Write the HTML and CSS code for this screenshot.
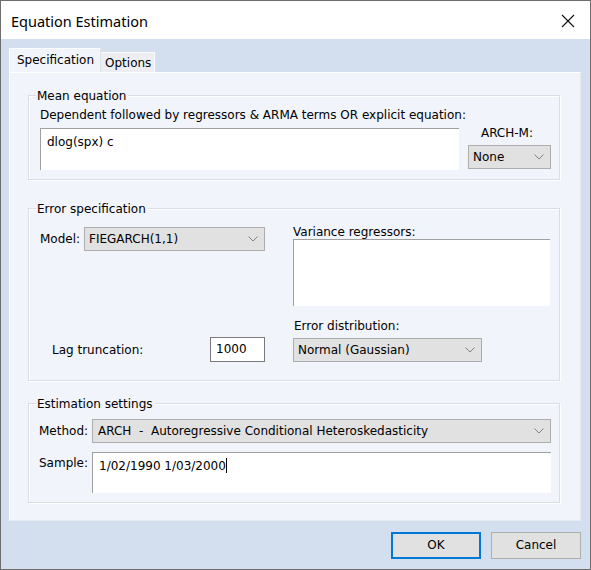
FILE: index.html
```
<!DOCTYPE html>
<html>
<head>
<meta charset="utf-8">
<link rel="stylesheet" href="styles.css">
</head>
<body>
<div class="window">
  <div class="titlebar">
    <span class="title">Equation Estimation</span>
    <svg class="close" width="14" height="14" viewBox="0 0 14 14"><path d="M1 1 L13 13 M13 1 L1 13" stroke="#111" stroke-width="1.1" fill="none"/></svg>
  </div>
  <div class="client">
    <div class="tabs">
      <div class="tab active">Specification</div>
      <div class="tab">Options</div>
    </div>
    <div class="panel">
      <div class="group g-mean">
        <div class="legend">Mean equation</div>
        <div class="mean-grid">
          <div class="lbl span2">Dependent followed by regressors &amp; ARMA terms OR explicit equation:</div>
          <div class="edit mean-edit">dlog(spx) c</div>
          <div class="archm">
            <div class="lbl">ARCH-M:</div>
            <div class="select s-archm"><span>None</span><svg class="chev" width="10" height="6" viewBox="0 0 10 6"><path d="M0.5 0.5 L5 5 L9.5 0.5" stroke="#777" stroke-width="0.9" fill="none"/></svg></div>
          </div>
        </div>
      </div>

      <div class="group g-err">
        <div class="legend">Error specification</div>
        <div class="err-left">
          <div class="model-row">
            <span class="lbl">Model:</span>
            <div class="select s-model"><span>FIEGARCH(1,1)</span><svg class="chev" width="10" height="6" viewBox="0 0 10 6"><path d="M0.5 0.5 L5 5 L9.5 0.5" stroke="#777" stroke-width="0.9" fill="none"/></svg></div>
          </div>
          <div class="lag-row">
            <span class="lbl">Lag truncation:</span>
            <div class="num">1000</div>
          </div>
        </div>
        <div class="err-right">
          <div class="lbl lbl-tight">Variance regressors:</div>
          <div class="edit var-edit"></div>
          <div class="lbl lbl-tight dist-lbl">Error distribution:</div>
          <div class="select s-dist"><span>Normal (Gaussian)</span><svg class="chev" width="10" height="6" viewBox="0 0 10 6"><path d="M0.5 0.5 L5 5 L9.5 0.5" stroke="#777" stroke-width="0.9" fill="none"/></svg></div>
        </div>
      </div>

      <div class="group g-est">
        <div class="legend">Estimation settings</div>
        <div class="est-grid">
          <span class="lbl">Method:</span>
          <div class="select s-method"><span class="pre">ARCH  -  Autoregressive Conditional Heteroskedasticity</span><svg class="chev" width="10" height="6" viewBox="0 0 10 6"><path d="M0.5 0.5 L5 5 L9.5 0.5" stroke="#777" stroke-width="0.9" fill="none"/></svg></div>
          <span class="lbl sample-lbl">Sample:</span>
          <div class="edit sample-edit">1/02/1990 1/03/2000<span class="caret"></span></div>
        </div>
      </div>
    </div>
    <div class="buttons">
      <div class="btn ok">OK</div>
      <div class="btn">Cancel</div>
    </div>
  </div>
</div>
</body>
</html>
```
FILE: styles.css
```
* { box-sizing: border-box; }
html, body { margin: 0; padding: 0; }
body {
  width: 591px;
  height: 570px;
  overflow: hidden;
  font-family: "DejaVu Sans", sans-serif;
  font-size: 12px;
  color: #000;
}
.window {
  width: 591px;
  height: 570px;
  border: 1px solid #6e6e6e;
  display: flex;
  flex-direction: column;
  background: #d3deef;
}
.titlebar {
  height: 38px;
  background: #fff;
  display: flex;
  align-items: center;
  justify-content: space-between;
  padding: 0 15px 0 10px;
  flex: none;
}
.title {
  font-family: "Noto Sans", "Open Sans", sans-serif;
  font-size: 14.5px;
  color: #000;
  margin-top: 1px;
}
.close { display: block; margin-top: 1px; }
.client {
  flex: 1;
  display: flex;
  flex-direction: column;
  padding: 9px 9px 0 8px;
}
.tabs {
  display: flex;
  align-items: flex-end;
  height: 24px;
}
.tab {
  height: 20px;
  line-height: 20px;
  padding: 0 3px 0 4px;
  background: #eceef3;
  border: 1px solid #fbfcfd;
  border-bottom: none;
  border-left: none;
}
.tab.active {
  height: 24px;
  line-height: 22px;
  padding: 0 6px 0 7px;
  background: #f1f4fa;
  border-left: 1px solid #fff;
  border-right: 1px solid #dde2ea;
}
.panel {
  width: 572px;
  height: 449px;
  background: #f1f4fa;
  border: 1px solid #fff;
  border-right-color: #e3e8f0;
  border-bottom-color: #e8edf5;
  padding: 22px 0 0 18px;
}
.group {
  position: relative;
  width: 532px;
  border: 1px solid #d9dee6;
  box-shadow: inset 1px 1px 0 #fff, 1px 1px 0 #fff;
}
.legend {
  position: absolute;
  top: -8px;
  left: 7px;
  line-height: 16px;
  padding: 0 2px 0 1px;
  background: #f1f4fa;
}
.lbl { line-height: 16px; white-space: nowrap; }
.lbl-tight { line-height: 13px; }
.pre { white-space: pre; }

.edit {
  background: #fff;
  border-top: 1px solid #a0a0a0;
  border-left: 1px solid #a0a0a0;
  padding: 5px 0 0 6px;
  line-height: 16px;
}
.select {
  display: flex;
  align-items: center;
  justify-content: space-between;
  height: 24px;
  background: #e1e1e1;
  border: 1px solid #adadad;
  padding: 0 6px 0 4px;
  line-height: 16px;
}
.chev { display: block; flex: none; }

/* Mean equation */
.g-mean { height: 85px; padding: 11px 0 0 11px; }
.mean-grid {
  display: grid;
  grid-template-columns: 419px 83px;
  column-gap: 9px;
}
.span2 { grid-column: 1 / 3; }
.mean-edit { height: 42px; margin-top: 5px; }
.archm { display: flex; flex-direction: column; align-items: stretch; margin-top: 2px; }
.archm .lbl { text-align: right; padding-right: 18px; }
.s-archm { margin-top: 4px; }

/* Error spec */
.g-err {
  margin-top: 28px;
  height: 173px;
  padding: 17px 0 0 11px;
  display: flex;
  gap: 28px;
}
.err-left {
  width: 225px;
  height: 136px;
  display: flex;
  flex-direction: column;
  justify-content: space-between;
}
.model-row { display: flex; align-items: center; margin-top: 1px; }
.model-row .lbl { width: 44px; }
.s-model { width: 181px; }
.lag-row {
  display: flex;
  align-items: center;
  justify-content: space-between;
  padding-left: 12px;
}
.num {
  width: 55px;
  height: 25px;
  background: #fff;
  border: 1px solid #7a7a7a;
  padding: 0 0 0 5px;
  line-height: 23px;
}
.err-right { width: 257px; display: flex; flex-direction: column; }
.var-edit { height: 67px; margin-top: 0; }
.dist-lbl { margin-top: 14px; padding-left: 1px; }
.s-dist { width: 189px; margin-top: 5px; }

/* Estimation */
.g-est {
  margin-top: 22px;
  height: 100px;
  padding: 15px 0 0 10px;
}
.est-grid {
  display: grid;
  grid-template-columns: 53px 459px;
  row-gap: 9px;
}
.est-grid > .lbl { align-self: center; }
.est-grid > .sample-lbl { align-self: start; padding-top: 3px; }
.s-method { padding-left: 5px; }
.sample-edit { height: 41px; padding-top: 5px; }
.caret {
  display: inline-block;
  width: 1px;
  height: 15px;
  background: #000;
  vertical-align: -3px;
}

/* Buttons */
.buttons {
  display: flex;
  justify-content: flex-end;
  gap: 10px;
  margin-top: 11px;
  padding-right: 0;
}
.btn {
  width: 90px;
  height: 27px;
  background: #e1e1e1;
  border: 1px solid #adadad;
  text-align: center;
  line-height: 25px;
}
.btn.ok {
  border: 2px solid #0078d7;
  line-height: 23px;
}
```
